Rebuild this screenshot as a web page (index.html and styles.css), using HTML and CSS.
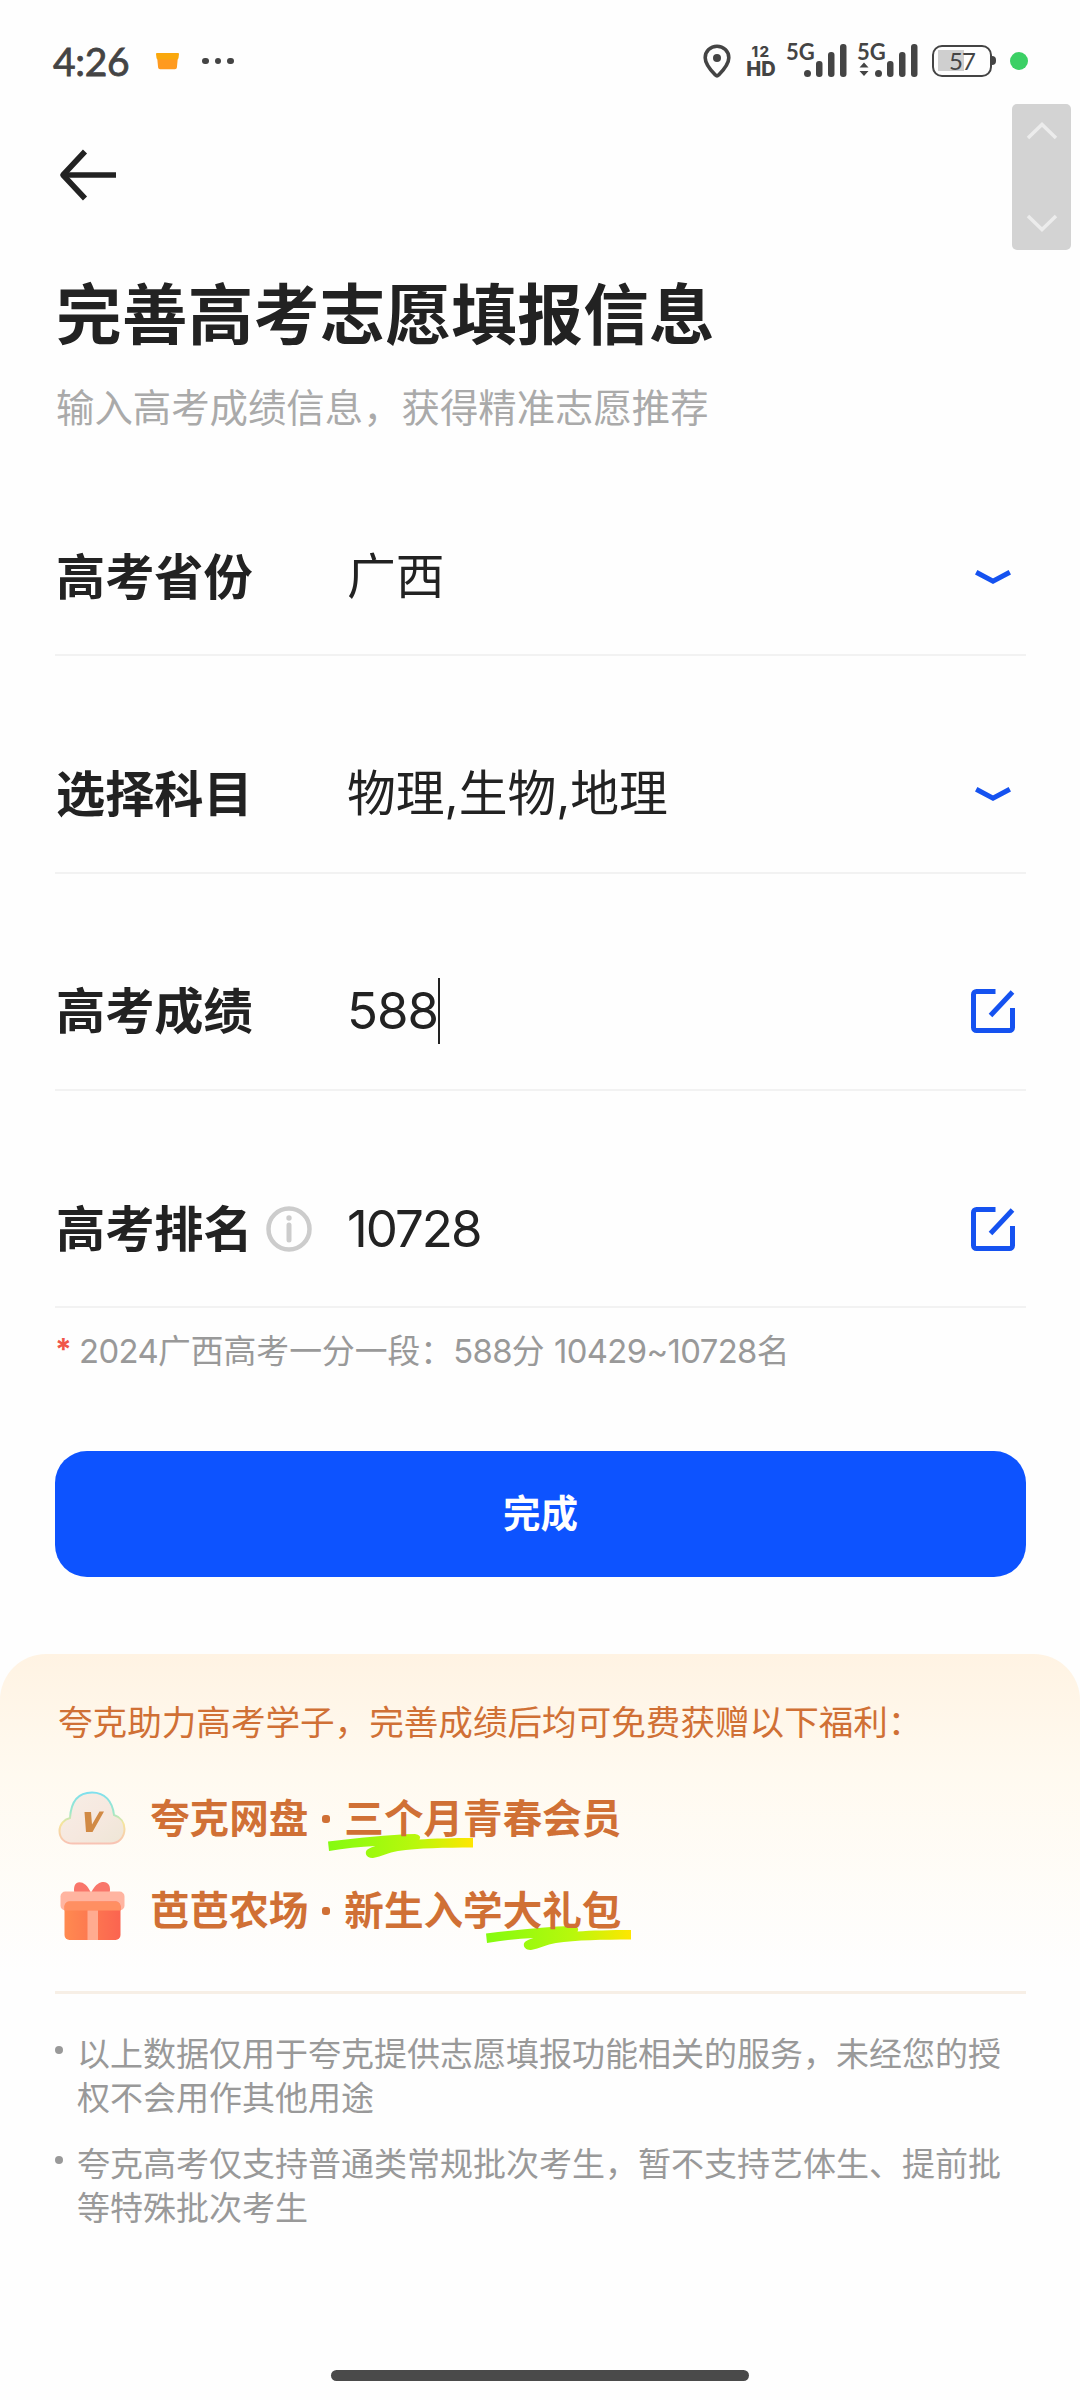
FILE: index.html
```
<!DOCTYPE html>
<html lang="zh-CN">
<head>
  <meta charset="UTF-8" />
  <meta name="viewport" content="width=device-width, initial-scale=1" />
  <title>完善高考志愿填报信息</title>
  <link rel="stylesheet" href="styles.css">
</head>
<body>
  <div class="status-bar">
    <span class="time">4:26</span>
    <svg class="notice-icon" width="23" height="17" viewBox="0 0 23 17">
      <path d="M1.2 5h20.6l-.9 9.5a2 2 0 0 1-2 1.800H4.100a2 2 0 0 1-2-1.800z" fill="#ff9a20" />
      <path d="M1 0h21a1 1 0 0 1 1 1.100l-.5 4a1.500 1.500 0 0 1-1.500 1.300H2A1.500 1.500 0 0 1 .5 5.100L0 1.100A1 1 0 0 1 1 0z" fill="#faa80c" />
    </svg>
    <div class="more-dots"><i></i><i></i><i></i></div>

    <div class="status-right">
      <svg class="pin" width="28" height="34" viewBox="0 0 28 34">
        <path d="M14 2.200C7.400 2.200 2.200 7.200 2.200 13.700c0 7 6.300 13.300 10.200 17.300q1.600 1.500 3.200 0c3.900-4 10.200-10.300 10.200-17.300C25.800 7.200 20.600 2.200 14 2.200z" fill="none" stroke="#444" stroke-width="3.600" />
        <circle cx="14" cy="14" r="4" fill="#444" />
      </svg>
      <div class="hd"><span class="hd-sims">12</span><span>HD</span></div>
      <div class="signal">
        <span class="net">5G</span>
        <svg width="62" height="34" viewBox="0 0 62 34" fill="#444">
          <circle cx="21.500" cy="29.500" r="3.500" />
          <rect x="30" y="17" width="6.500" height="16" rx="3" />
          <rect x="42" y="8" width="6.500" height="25" rx="3" />
          <rect x="54" y="0" width="6.500" height="33" rx="3" />
        </svg>
      </div>
      <div class="signal">
        <span class="net">5G</span>
        <svg width="62" height="34" viewBox="0 0 62 34" fill="#444">
          <path d="M2.500 23.500L7 18.500l4.500 5zM2.500 27L7 32l4.500-5z" />
          <circle cx="21.500" cy="29.500" r="3.500" />
          <rect x="30" y="17" width="6.500" height="16" rx="3" />
          <rect x="42" y="8" width="6.500" height="25" rx="3" />
          <rect x="54" y="0" width="6.500" height="33" rx="3" />
        </svg>
      </div>
      <div class="battery"><span>57</span></div>
      <i class="green-dot"></i>
    </div>
  </div>

  <div class="scroll-pill">
    <svg width="32" height="20" viewBox="0 0 32 20"><path d="M2 17L16 3.500 30 17" /></svg>
    <svg width="32" height="20" viewBox="0 0 32 20"><path d="M2 3L16 16.500 30 3" /></svg>
  </div>

  <header>
    <svg class="back" width="58" height="52" viewBox="0 0 58 52" fill="none" stroke="#222" stroke-width="5.600">
      <path d="M26 2.500L4 26l22 23.500" stroke-linejoin="round" />
      <path d="M4 26h53" />
    </svg>
    <h1>完善高考志愿填报信息</h1>
    <p class="subtitle">输入高考成绩信息，获得精准志愿推荐</p>
  </header>

  <main>
    <div class="form-row">
      <span class="label">高考省份</span>
      <span class="value">广西</span>
      <svg class="chevron" width="36" height="18" viewBox="0 0 36 18"><path d="M1.200 4.200L18 13.200l16.800-9" /></svg>
    </div>
    <div class="form-row">
      <span class="label">选择科目</span>
      <span class="value">物理,生物,地理</span>
      <svg class="chevron" width="36" height="18" viewBox="0 0 36 18"><path d="M1.200 4.200L18 13.200l16.800-9" /></svg>
    </div>
    <div class="form-row">
      <span class="label">高考成绩</span>
      <span class="value num">588<i class="cursor"></i></span>
      <svg class="edit" width="44" height="44" viewBox="0 0 44 44">
        <path d="M24.500 2.500H5.500a3 3 0 0 0-3 3v33a3 3 0 0 0 3 3h33a3 3 0 0 0 3-3V19" />
        <path d="M19.500 26.500L41.500 3" />
      </svg>
    </div>
    <div class="form-row">
      <span class="label">高考排名
        <svg class="info" width="46" height="46" viewBox="0 0 46 46">
          <circle cx="23" cy="23" r="20.500" fill="none" stroke="#ccc" stroke-width="4.500" />
          <circle cx="23" cy="12" r="2.700" fill="#ccc" />
          <path d="M23 19v15" stroke="#ccc" stroke-width="5" stroke-linecap="round" />
        </svg>
      </span>
      <span class="value num rank">10728</span>
      <svg class="edit" width="44" height="44" viewBox="0 0 44 44">
        <path d="M24.500 2.500H5.500a3 3 0 0 0-3 3v33a3 3 0 0 0 3 3h33a3 3 0 0 0 3-3V19" />
        <path d="M19.500 26.500L41.500 3" />
      </svg>
    </div>
    <p class="hint"><b>*</b><span><em>2024</em>广西高考一分一段：<em>588</em>分 <em>10429~10728</em>名</span></p>
    <button class="submit-btn">完成</button>
  </main>

  <section class="benefits">
    <p class="benefits-title">夸克助力高考学子，完善成绩后均可免费获赠以下福利：</p>
    <div class="benefit">
      <svg class="gift-icon" width="68" height="60" viewBox="0 0 68 60">
        <defs>
          <linearGradient id="cloudFill" x1="0" y1="0" x2="1" y2="1">
            <stop offset="0" stop-color="#f7eee6" />
            <stop offset=".55" stop-color="#f6e8df" />
            <stop offset="1" stop-color="#eee6d6" />
          </linearGradient>
          <linearGradient id="cloudEdge" x1="0" y1="0" x2="0" y2="1">
            <stop offset="0" stop-color="#7fe0ee" />
            <stop offset=".4" stop-color="#9fe8c8" />
            <stop offset=".6" stop-color="#f6e59c" />
            <stop offset="1" stop-color="#f8c3b4" />
          </linearGradient>
        </defs>
        <path d="M15 54.500C6.500 54.500 1.500 49 1.500 42c0-6.500 4.500-11.500 10.500-13C13 12 21 3.500 34 3.500c13 0 20.500 9 22 22.500 6.500 2 10.500 7.500 10.500 14 0 8.500-6 14.500-14.500 14.500z" fill="url(#cloudFill)" stroke="url(#cloudEdge)" stroke-width="2" />
        <path d="M26.500 23h6.500l1 12.500L41.500 22.500H46L34.500 43h-6.500z" fill="#d18a45" />
      </svg>
      <span class="benefit-text">夸克网盘<i class="sep"></i><span class="marked">三个月<svg class="marker" width="145" height="25" viewBox="0 0 145 25"><use href="#swoosh" /></svg></span>青春会员</span>
    </div>
    <div class="benefit">
      <svg class="gift-icon" width="68" height="60" viewBox="0 0 68 60">
        <defs>
          <linearGradient id="boxFill" x1="0" y1="0" x2="1" y2="0">
            <stop offset="0" stop-color="#ff8a50" />
            <stop offset="1" stop-color="#fb6450" />
          </linearGradient>
          <linearGradient id="markerFill" x1="0" y1="0" x2="1" y2="0">
            <stop offset="0" stop-color="#84fb10" />
            <stop offset=".6" stop-color="#b8f80c" />
            <stop offset="1" stop-color="#ffe600" />
          </linearGradient>
          <g id="swoosh">
            <path d="M0 7.500C30 4 60 .5 87 0q7 1 4.500 5.500C105 4.500 125 4 145 4v9.500c-28 0-55 .5-75 3.500C60 18.500 54 22.500 45 24c-7 .5-9-6-5.500-8.500 2-1.500 5-2.500 8-3.500C32 12.500 16 14.500 1 17z" fill="url(#markerFill)" />
          </g>
        </defs>
        <path d="M33 12C28-1 18-1 16.500 5c-1 4-.5 6 1 9h33c1.500-3 2-5 1-9C49-1 40-1 34.500 9z" fill="#f9766a" />
        <rect x="2.500" y="10.500" width="64" height="19" rx="5" fill="#ffb4a0" />
        <rect x="6.500" y="20.500" width="56" height="38.500" rx="5" fill="url(#boxFill)" />
        <path d="M6.500 29.500v-4a5 5 0 0 1 5-5h46a5 5 0 0 1 5 5v4z" fill="#ff8f62" />
        <rect x="29.500" y="29.500" width="10.500" height="29.500" fill="#ffab90" />
      </svg>
      <span class="benefit-text">芭芭农场<i class="sep"></i>新生入学<span class="marked">大礼包<svg class="marker" width="145" height="25" viewBox="0 0 145 25"><use href="#swoosh" /></svg></span></span>
    </div>
  </section>

  <ul class="notes">
    <li>以上数据仅用于夸克提供志愿填报功能相关的服务，未经您的授权不会用作其他用途</li>
    <li>夸克高考仅支持普通类常规批次考生，暂不支持艺体生、提前批等特殊批次考生</li>
  </ul>

  <div class="home-bar"></div>
</body>
</html>
```
FILE: styles.css
```
* {
  margin: 0;
  padding: 0;
  box-sizing: border-box;
}

body {
  width: 1080px;
  height: 2400px;
  position: relative;
  display: flex;
  flex-direction: column;
  font-family: 'Inter', 'Noto Sans CJK SC', sans-serif;
  background: #fefefe;
  color: #222;
  overflow: hidden;
}

svg {
  display: block;
  flex: none;
}

/* status bar */
.status-bar {
  display: flex;
  align-items: center;
  height: 104px;
  padding: 18px 52px 0 53px;
  color: #444;
}

.time {
  width: 103px;
  font-family: 'Lato', sans-serif;
  font-size: 39px;
  line-height: 40px;
  letter-spacing: -0.3px;
  -webkit-text-stroke: 0.8px #444;
}

.more-dots {
  display: flex;
  gap: 6px;
  margin-left: 23px;
}

.more-dots i {
  width: 6.5px;
  height: 6.5px;
  border-radius: 50%;
  background: #444;
}

.status-right {
  display: flex;
  align-items: center;
  margin-left: auto;
}

.hd {
  display: flex;
  flex-direction: column;
  align-items: center;
  width: 30px;
  margin-left: 15px;
  font-size: 20px;
  font-weight: 800;
  line-height: 20px;
}

.hd-sims {
  font-size: 15px;
  letter-spacing: 1.5px;
  line-height: 15px;
}

.signal {
  position: relative;
  margin-left: 10px;
}

.signal + .signal {
  margin-left: 9px;
}

.net {
  position: absolute;
  left: 0;
  top: -3px;
  font-family: 'Lato', sans-serif;
  font-size: 22px;
  font-weight: 700;
  line-height: 22px;
}

.battery {
  position: relative;
  width: 60px;
  height: 32px;
  margin-left: 13px;
  border: 2.5px solid #444;
  border-radius: 10px;
  background: linear-gradient(#cfcfcf, #cfcfcf) 3.5px 3px / 26px 21px no-repeat;
  font-family: 'Lato', sans-serif;
  font-size: 24px;
  line-height: 27px;
  letter-spacing: -1px;
  text-align: center;
}

.battery::after {
  content: '';
  position: absolute;
  right: -6px;
  top: 9px;
  width: 4px;
  height: 9px;
  border-radius: 0 4px 4px 0;
  background: #444;
}

.green-dot {
  width: 18px;
  height: 18px;
  margin-left: 18px;
  border-radius: 50%;
  background: #3bd065;
}

/* floating scroll control */
.scroll-pill {
  position: absolute;
  left: 1012px;
  top: 104px;
  width: 59px;
  height: 146px;
  padding: 17px 0;
  display: flex;
  flex-direction: column;
  justify-content: space-between;
  align-items: center;
  border-radius: 5px;
  background: #d3d3d3;
}

.scroll-pill path {
  fill: none;
  stroke: #ececec;
  stroke-width: 3.5;
}

/* heading */
header {
  padding: 45px 56px 0;
}

.back {
  margin-left: 3px;
}

h1 {
  margin-top: 74px;
  font-size: 65.6px;
  font-weight: 700;
  line-height: 80px;
  letter-spacing: 0.3px;
}

.subtitle {
  margin-top: 28px;
  font-size: 38.4px;
  line-height: 50px;
  color: #aaa;
}

/* form */
main {
  padding: 6px 54px 0 55px;
}

.form-row {
  display: flex;
  align-items: center;
  height: 217.33px;
  padding: 60px 11px 0 1px;
  border-bottom: 2px solid #f2f2f2;
}

.label {
  display: flex;
  align-items: center;
  gap: 13px;
  width: 291px;
  font-size: 49.2px;
  font-weight: 700;
  line-height: 60px;
}

.value {
  display: flex;
  align-items: center;
  font-size: 48.8px;
  line-height: 60px;
}

.num {
  font-size: 51px;
  letter-spacing: -1px;
}

.rank {
  letter-spacing: -2px;
}

.cursor {
  width: 2px;
  height: 66px;
  background: #222;
}

.chevron {
  margin: 0 4px 0 auto;
}

.edit {
  margin-left: auto;
}

.chevron path,
.edit path {
  fill: none;
  stroke: #1552f0;
  stroke-width: 5;
}

.hint {
  display: flex;
  align-items: center;
  margin-top: 22px;
  font-size: 32.8px;
  line-height: 42px;
  color: #999;
}

.hint b {
  width: 24px;
  font-size: 30px;
  line-height: 38px;
  align-self: flex-start;
  color: #f0564a;
}

.hint em {
  font-style: normal;
  letter-spacing: -0.6px;
}

.submit-btn {
  display: block;
  width: 971px;
  height: 126px;
  margin-top: 79px;
  padding-bottom: 7px;
  border: none;
  border-radius: 32px;
  background: #0d53ff;
  color: #fff;
  font-family: inherit;
  font-size: 37.5px;
  font-weight: 700;
}

/* benefits */
.benefits {
  height: 318px;
  margin-top: 77px;
  padding: 42px 58px 0;
  border-radius: 46px 46px 0 0;
  background: linear-gradient(#fff3e3, #fffaf0 38%, #fefefe);
  color: #d07035;
}

.benefits-title {
  margin-bottom: 41px;
  font-size: 34.6px;
  line-height: 52px;
}

.benefit {
  display: flex;
  align-items: center;
  height: 60px;
  margin-bottom: 32px;
}

.gift-icon {
  margin-right: 24px;
}

.benefit-text {
  display: flex;
  align-items: center;
  font-size: 39.6px;
  font-weight: 700;
  line-height: 60px;
}

.sep {
  width: 8px;
  height: 8px;
  margin: 0 14px;
  border-radius: 3px;
  background: #d07035;
}

.marked {
  position: relative;
  z-index: 0;
}

.marker {
  position: absolute;
  right: -10px;
  top: 45px;
  z-index: -1;
}

/* notes */
.notes {
  margin: 19px 54px 0 55px;
  padding-top: 38px;
  border-top: 3px solid #f7efe6;
  list-style: none;
  font-size: 33px;
  line-height: 44px;
  color: #999;
}

.notes li {
  position: relative;
  margin-bottom: 22px;
  padding-left: 22px;
}

.notes li::before {
  content: '';
  position: absolute;
  left: 0;
  top: 14px;
  width: 8px;
  height: 8px;
  border-radius: 50%;
  background: #999;
}

.home-bar {
  width: 418px;
  height: 11px;
  margin: auto auto 19px;
  border-radius: 6px;
  background: #4a4a4a;
}
```
